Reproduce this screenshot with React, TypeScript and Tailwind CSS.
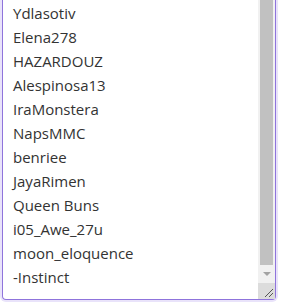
const names = [
  "Ydlasotiv",
  "Elena278",
  "HAZARDOUZ",
  "Alespinosa13",
  "IraMonstera",
  "NapsMMC",
  "benriee",
  "JayaRimen",
  "Queen Buns",
  "i05_Awe_27u",
  "moon_eloquence",
  "-Instinct",
];

export default function App() {
  return (
    <div className="h-[305px] w-[281px] bg-white">
      <div
        className="ml-[2px] flex h-[300px] w-[274px] rounded-b-[4px] border border-t-0 border-[#8f74dc] shadow-[0_0_0_2px_#e9e3fa]"
        style={{ fontFamily: '"Open Sans", sans-serif' }}
      >
        <div className="flex-1 overflow-hidden pl-[10px] pt-[1px]">
          {names.map((n) => (
            <div key={n} className="h-[24px] text-[15px] leading-[24px] text-[#333]">
              {n}
            </div>
          ))}
        </div>
        <div className="flex w-[17px] flex-col bg-[#f1f1f1]">
          <div className="mx-[2px] flex-1 bg-[#c1c1c1]" />
          <div className="mt-[1px] flex h-[17px] items-center justify-center">
            <svg width="8" height="5" viewBox="0 0 8 5">
              <path d="M0 0h8L4 4z" fill="#a3a3a3" />
            </svg>
          </div>
          <div className="flex h-[16px] items-end justify-end bg-[#dcdcdc] pb-[1px] pr-[1px]">
            <svg width="11" height="11" viewBox="0 0 11 11">
              <path d="M10 2L2 10M10 6L6 10" stroke="#555" strokeWidth="1" />
            </svg>
          </div>
        </div>
      </div>
    </div>
  );
}
